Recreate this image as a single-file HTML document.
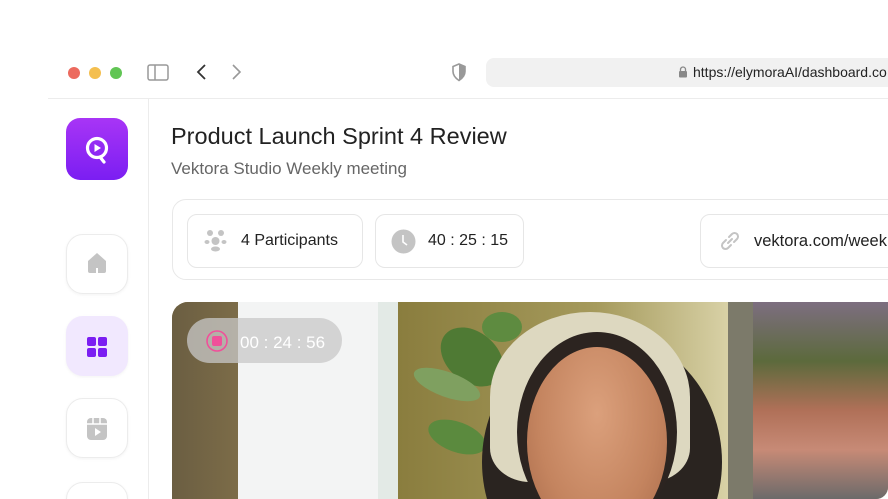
<!DOCTYPE html>
<html style="overflow:hidden;width:888px;height:499px"><head><meta charset="utf-8"><style>
*{margin:0;padding:0;box-sizing:border-box}
body{width:888px;height:499px;overflow:hidden;background:#fff;font-family:"Liberation Sans",sans-serif}
#w{position:relative;width:888px;height:499px;overflow:hidden}
.a{position:absolute}
.dot{position:absolute;width:12px;height:12px;border-radius:50%;top:67px}
.sb{position:absolute;left:66px;width:62px;height:60px;border-radius:17px;border:1px solid #ececec;background:#fff;box-shadow:0 1px 3px rgba(0,0,0,.05)}
.pill{position:absolute;top:214px;height:54px;border:1px solid #e6e6e6;border-radius:10px;background:#fff;font-size:16px;color:#222;display:flex;align-items:center}
</style></head><body><div id="w">
<div class="dot" style="left:68px;background:#ec6a5e"></div>
<div class="dot" style="left:89px;background:#f4bf4f"></div>
<div class="dot" style="left:110px;background:#61c554"></div>
<svg class="a" style="left:147px;top:64px" width="22" height="17"><rect x="1" y="1" width="20" height="15" rx="2" fill="none" stroke="#999" stroke-width="1.5"/><line x1="8" y1="1" x2="8" y2="16" stroke="#999" stroke-width="1.5"/></svg>
<svg class="a" style="left:195px;top:63px" width="14" height="18"><path d="M10 2L3 9l7 7" fill="none" stroke="#333" stroke-width="1.8"/></svg>
<svg class="a" style="left:229px;top:63px" width="14" height="18"><path d="M4 2l7 7-7 7" fill="none" stroke="#999" stroke-width="1.6"/></svg>
<svg class="a" style="left:451px;top:63px" width="16" height="19"><path d="M8 1L2 3.5v5c0 4 3 7 6 9 3-2 6-5 6-9v-5z" fill="none" stroke="#999" stroke-width="1.6"/><path d="M8 1v16.5c3-2 6-5 6-9v-5z" fill="#999"/></svg>
<div class="a" style="left:486px;top:58px;width:420px;height:29px;background:#f1f1f1;border-radius:8px"></div>
<svg class="a" style="left:678px;top:66px" width="10" height="12"><path d="M2.5 5V3.5a2.5 2.5 0 015 0V5" fill="none" stroke="#888" stroke-width="1.3"/><rect x="1" y="5" width="8" height="6.5" rx="1" fill="#888"/></svg>
<div class="a" style="left:693px;top:64px;font-size:14px;color:#222;white-space:nowrap">https://elymoraAI/dashboard.co</div>
<div class="a" style="left:48px;top:98px;width:840px;height:1px;background:#ececec"></div>
<div class="a" style="left:148px;top:98px;width:1px;height:401px;background:#ececec"></div>
<div class="a" style="left:66px;top:118px;width:62px;height:62px;border-radius:14px;background:linear-gradient(#a835f6,#7b1ef2)"></div>
<svg class="a" style="left:80px;top:132px" width="34" height="34"><circle cx="17" cy="16" r="9.5" fill="none" stroke="#fff" stroke-width="3.2"/><path d="M14.5 12v8l6.5-4z" fill="#fff"/><path d="M20 25l4 5" stroke="#fff" stroke-width="3.2" stroke-linecap="round"/></svg>
<div class="sb" style="top:234px"></div>
<svg class="a" style="left:85px;top:251px" width="24" height="24"><path d="M3 10L12 2l9 8v10a2 2 0 01-2 2H5a2 2 0 01-2-2z" fill="#c4c4c4"/><rect x="11" y="17" width="2" height="5" fill="#fff"/></svg>
<div class="sb" style="top:316px;background:#f1e8fe;border-color:#f1e8fe"></div>
<svg class="a" style="left:86px;top:336px" width="22" height="22"><rect x="1" y="1" width="9" height="9" rx="2" fill="#7b1ef2"/><rect x="12" y="1" width="9" height="9" rx="2" fill="#7b1ef2"/><rect x="1" y="12" width="9" height="9" rx="2" fill="#7b1ef2"/><rect x="12" y="12" width="9" height="9" rx="2" fill="#7b1ef2"/></svg>
<div class="sb" style="top:398px"></div>
<svg class="a" style="left:85px;top:417px" width="24" height="24"><rect x="2" y="1" width="20" height="22" rx="4" fill="#c4c4c4"/><path d="M2 7h20M8 1v6M15 1v6" stroke="#fff" stroke-width="1.5"/><path d="M10 11v8l6-4z" fill="#fff"/></svg>
<div class="sb" style="top:482px"></div>
<div class="a" style="left:171px;top:123px;font-size:23.5px;color:#222;white-space:nowrap">Product Launch Sprint 4 Review</div>
<div class="a" style="left:171px;top:159px;font-size:17px;color:#666;white-space:nowrap">Vektora Studio Weekly meeting</div>
<div class="a" style="left:172px;top:199px;width:740px;height:81px;border:1px solid #e8e8e8;border-radius:14px"></div>
<div class="pill" style="left:187px;width:176px;padding-left:53px">4 Participants</div>
<svg class="a" style="left:204px;top:229px" width="24" height="24"><circle cx="6" cy="4" r="3" fill="#c4c4c4"/><circle cx="17" cy="4" r="3" fill="#c4c4c4"/><circle cx="11.5" cy="12" r="4" fill="#c4c4c4"/><ellipse cx="3" cy="13" rx="2.5" ry="2" fill="#c4c4c4"/><ellipse cx="20" cy="13" rx="2.5" ry="2" fill="#c4c4c4"/><ellipse cx="11.5" cy="20" rx="4.5" ry="2.5" fill="#c4c4c4"/></svg>
<div class="pill" style="left:375px;width:149px;padding-left:52px">40 : 25 : 15</div>
<svg class="a" style="left:391px;top:229px" width="25" height="25"><circle cx="12.5" cy="12.5" r="12" fill="#c4c4c4"/><path d="M12 6v7l4 3" fill="none" stroke="#fff" stroke-width="1.6"/></svg>
<div class="pill" style="left:700px;width:260px;padding-left:53px;font-size:16.5px">vektora.com/weekly</div>
<svg class="a" style="left:717px;top:228px" width="26" height="26"><path d="M11 15l4-4M9 12l-3 3a3.5 3.5 0 005 5l3-3M17 14l3-3a3.5 3.5 0 00-5-5l-3 3" fill="none" stroke="#c4c4c4" stroke-width="2" stroke-linecap="round"/></svg>
<div class="a" style="left:172px;top:302px;width:716px;height:197px;border-radius:16px 0 12px 0;overflow:hidden;background:#8a7a45">
 <div class="a" style="left:0;top:0;width:66px;height:197px;background:linear-gradient(90deg,#6b5e42,#7c6c48)"></div>
 <div class="a" style="left:66px;top:0;width:140px;height:197px;background:#f3f4f4"></div>
 <div class="a" style="left:206px;top:0;width:20px;height:197px;background:#e3eae6"></div>
 <div class="a" style="left:226px;top:0;width:330px;height:197px;background:linear-gradient(90deg,#8a7d3e,#a59a5c 60%,#d8d1a6)"></div>
 <div class="a" style="left:556px;top:0;width:25px;height:197px;background:#7c7a6a"></div>
 <div class="a" style="left:581px;top:0;width:140px;height:197px;background:linear-gradient(#7d6e80 0%,#5c6a3c 30%,#b07058 55%,#c78a76 75%,#6c6a6a)"></div>
 <div class="a" style="left:265px;top:30px;width:70px;height:50px;border-radius:50%;background:#4f7a34;transform:rotate(40deg)"></div>
 <div class="a" style="left:240px;top:70px;width:70px;height:25px;border-radius:50%;background:#7fa060;transform:rotate(20deg)"></div>
 <div class="a" style="left:255px;top:120px;width:60px;height:30px;border-radius:50%;background:#5b8a3e;transform:rotate(20deg)"></div>
 <div class="a" style="left:310px;top:10px;width:40px;height:30px;border-radius:50%;background:#5e8b40"></div>
 <div class="a" style="left:310px;top:30px;width:240px;height:260px;border-radius:50%;background:#2a2420"></div>
 <div class="a" style="left:318px;top:10px;width:200px;height:170px;border-radius:50% 50% 20% 20%;background:#ddd8c0"></div>
 <div class="a" style="left:345px;top:30px;width:160px;height:200px;border-radius:50%;background:#2c2420"></div>
 <div class="a" style="left:355px;top:45px;width:140px;height:190px;border-radius:50%;background:radial-gradient(ellipse at 50% 35%,#dba07c,#c4845f 60%,#a86a4a)"></div>
</div>
<div class="a" style="left:187px;top:318px;width:155px;height:45px;border-radius:23px;background:rgba(200,200,200,.75)"></div>
<svg class="a" style="left:205px;top:329px" width="24" height="24"><circle cx="12" cy="12" r="10" fill="none" stroke="#f0509a" stroke-width="1.6"/><rect x="7" y="7" width="10" height="10" rx="2" fill="#f0509a"/></svg>
<div class="a" style="left:240px;top:333px;font-size:17px;color:#fff;white-space:nowrap">00 : 24 : 56</div>
</div></body></html>
